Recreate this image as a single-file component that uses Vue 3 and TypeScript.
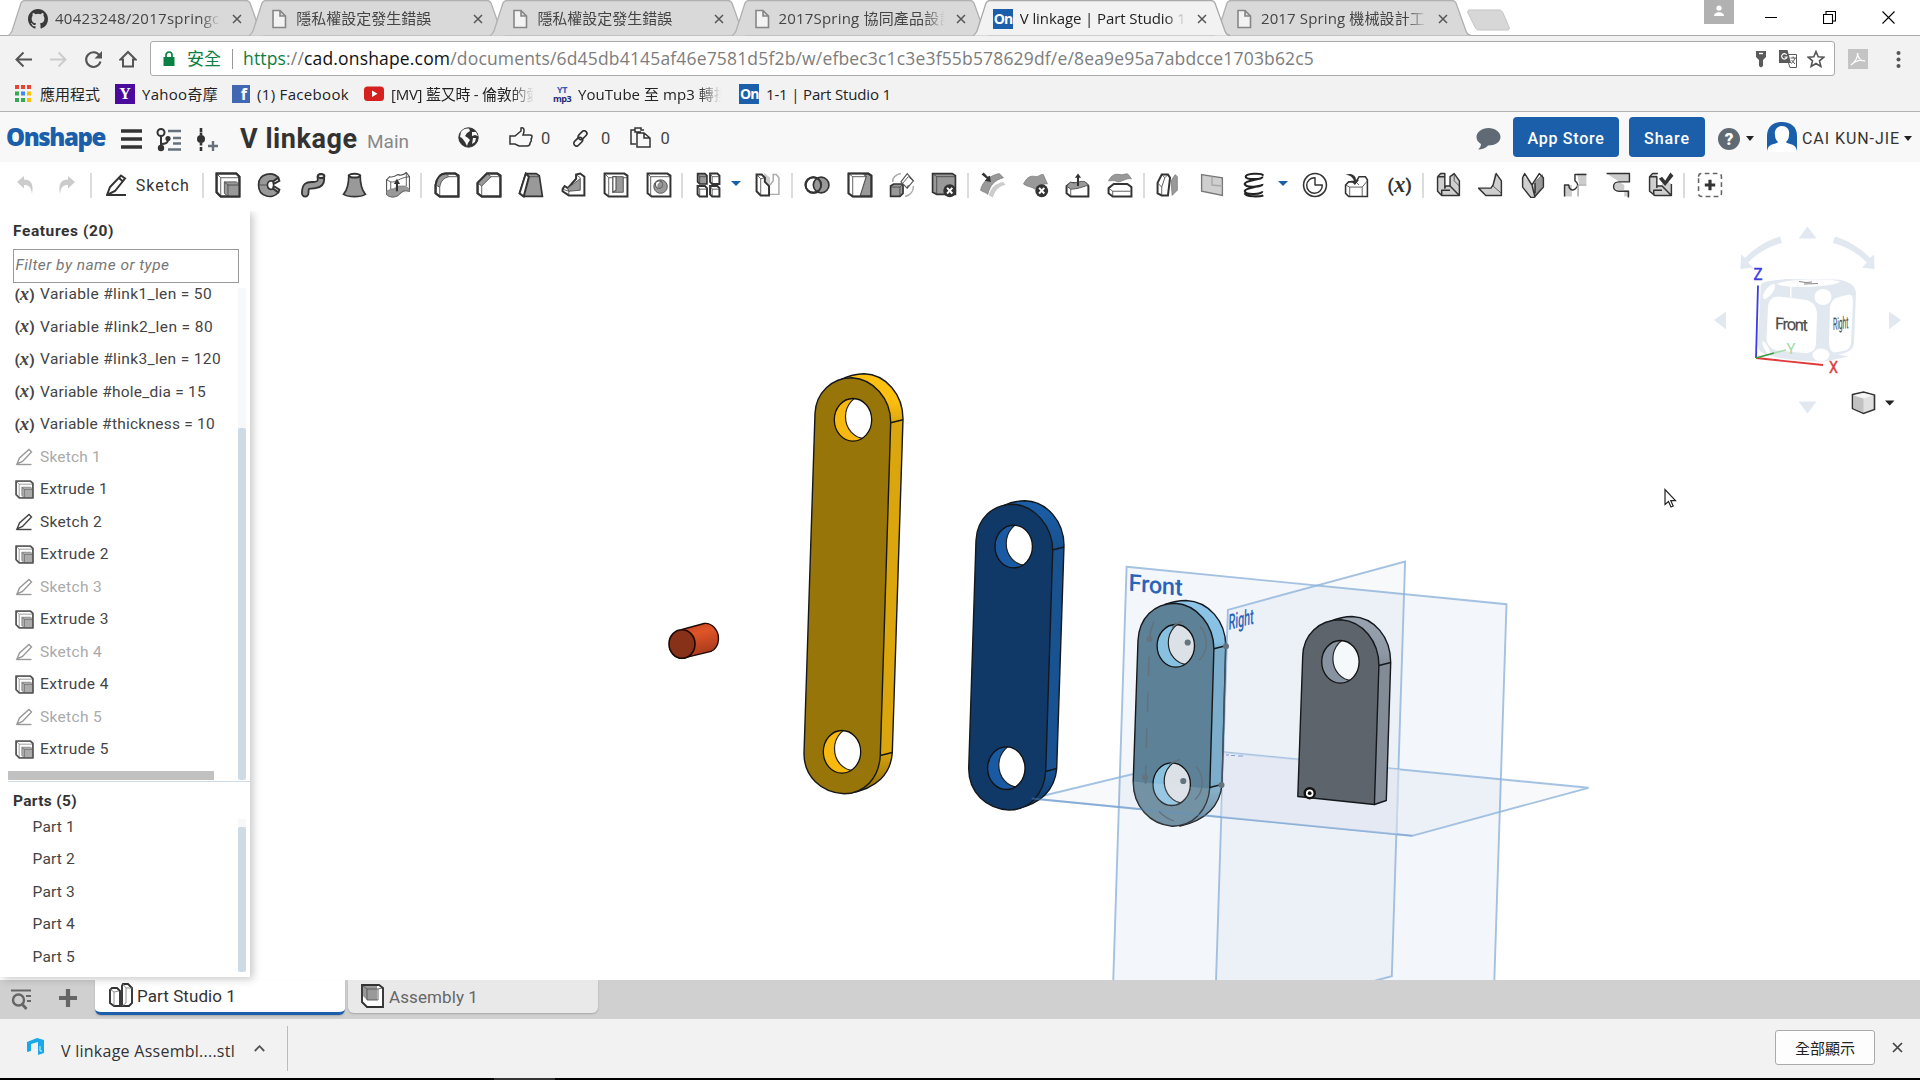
<script setup lang="ts">
import type { Directive } from 'vue'

interface Tab { title: string; kind: 'github' | 'page' | 'onshape'; width?: number }
interface Bookmark { label: string; icon: string; width: number; clip?: number; gap: number }
interface Feature { label: string; kind: 'var' | 'sketch' | 'extrude'; off?: boolean; width: number }

/* Tracks a label out (or in) so that it takes up the given width in pixels. */
const vFit: Directive<HTMLElement, number | undefined> = {
  mounted(el, { value }) {
    if (!value) return
    const count = Array.from(el.textContent ?? '').length
    const natural = el.getBoundingClientRect().width
    el.style.letterSpacing = `${(value - natural) / count}px`
  },
}

const tabs: Tab[] = [
  { title: '40423248/2017springcd', kind: 'github', width: 174 },
  { title: '隱私權設定發生錯誤', kind: 'page', width: 135 },
  { title: '隱私權設定發生錯誤', kind: 'page', width: 135 },
  { title: '2017Spring 協同產品設計', kind: 'page', width: 176 },
  { title: 'V linkage | Part Studio 1', kind: 'onshape', width: 166 },
  { title: '2017 Spring 機械設計工', kind: 'page', width: 164 },
]

const bookmarks: Bookmark[] = [
  { label: '應用程式', icon: 'apps', width: 60, gap: 14 },
  { label: 'Yahoo奇摩', icon: 'yahoo', width: 76, gap: 15 },
  { label: '(1) Facebook', icon: 'facebook', width: 92, gap: 15 },
  { label: '[MV] 藍又時 - 倫敦的愛', icon: 'youtube', width: 150, clip: 142, gap: 15 },
  { label: 'YouTube 至 mp3 轉換', icon: 'mp3', width: 151, clip: 145, gap: 20 },
  { label: '1-1 | Part Studio 1', icon: 'onshape', width: 125, gap: 16 },
]

const features: Feature[] = [
  { label: 'Variable #link1_len = 50', kind: 'var', width: 172 },
  { label: 'Variable #link2_len = 80', kind: 'var', width: 173 },
  { label: 'Variable #link3_len = 120', kind: 'var', width: 181 },
  { label: 'Variable #hole_dia = 15', kind: 'var', width: 166 },
  { label: 'Variable #thickness = 10', kind: 'var', width: 175 },
  { label: 'Sketch 1', kind: 'sketch', off: true, width: 61 },
  { label: 'Extrude 1', kind: 'extrude', width: 68 },
  { label: 'Sketch 2', kind: 'sketch', width: 62 },
  { label: 'Extrude 2', kind: 'extrude', width: 69 },
  { label: 'Sketch 3', kind: 'sketch', off: true, width: 62 },
  { label: 'Extrude 3', kind: 'extrude', width: 69 },
  { label: 'Sketch 4', kind: 'sketch', off: true, width: 62 },
  { label: 'Extrude 4', kind: 'extrude', width: 69 },
  { label: 'Sketch 5', kind: 'sketch', off: true, width: 62 },
  { label: 'Extrude 5', kind: 'extrude', width: 69 },
]

const parts = ['Part 1', 'Part 2', 'Part 3', 'Part 4', 'Part 5']

/* Tool glyphs on a 24 x 24 grid: d = dark stroke, g = grey fill, w = white fill,
   l = thin line, k = solid dark, f = faint line, s = soft grey fill. */
const G: Record<string, [string, string][]> = {
  extrude: [['w', 'M1 1H20L23 4V23H5L1 19Z'], ['l', 'M1 1L5 5M5 23V5H23'], ['g1', 'M8.500 9H20L23 11.500V23H12L8.500 20Z'], ['l', 'M8.500 9L12 12V23M12 12H23'], ['d', 'M1 1H20L23 4V23H5L1 19Z']],
  revolve: [['g', 'M20 5C15-1 1 0 1 12C1 24 15 26 20 19L15 15.500C12 17.500 9.500 15 9.500 12C9.500 9 12 7 15 8.500Z'], ['w', 'M20 5L21 8L15.500 11L15 8.500ZM20 19L21 16.500L15.500 13L15 15.500Z'], ['l', 'M1 12H10']],
  sweep: [['t1', 'M4.500 20C4.500 10 9 13 14 12C20 11 20 8 19.500 4.500'], ['t2', 'M4.500 20C4.500 10 9 13 14 12C20 11 20 8 19.500 4.500'], ['w', 'M16.500 3.500C17 1 23 1 23 3.500C22 6 17 6 16.500 3.500Z']],
  loft: [['g', 'M6 3C6 11 5 16 1 21C6 24 17 24 22 21C18 16 17 11 17 3Z'], ['w', 'M6 3C7 .5 16 .5 17 3C16 5.500 7 5.500 6 3Z']],
  thicken: [['wl', 'M1 7L4 4C7 5 9 4 12 2C15 3 18 2 20 0L23 4V18C17 16 15 19 12 22C8 24 4 24 1 21Z'], ['g0', 'M1 18L5 16C9 16 10 14 13 13H19L23 16V18C17 16 15 19 12 22C8 24 4 24 1 21Z'], ['l', 'M1 7L5 9C10 10 13 5 23 4M5 9V16M20 1V13'], ['k', 'M10 18V11H8L11 6L14 11H12V18Z']],
  fillet: [['w', 'M1 12C2 5 6 1 11 1H20L23 3V23H5L1 20Z'], ['g1', 'M1 12C2 5 6 1 11 1L14 4C9 5 6 8 5 14Z'], ['l', 'M5 14V23M14 4H23'], ['d', 'M1 12C2 5 6 1 11 1H20L23 3V23H5L1 20Z']],
  chamfer: [['w', 'M1 10L10 1H20L23 3V23H5L1 20Z'], ['g1', 'M1 10L10 1L14 4L5 13Z'], ['l', 'M5 13V23M14 4H23'], ['d', 'M1 10L10 1H20L23 3V23H5L1 20Z']],
  draft: [['g', 'M7 1H17L20 3L23 23H5L1 20Z'], ['w', 'M7 1L10 4L5 23L1 20Z'], ['l', 'M10 4H20']],
  rib: [['w', 'M1 16L3 13L6 15L14 6V2L18 1L22 4V22H7L1 18Z'], ['g1', 'M6 15L18 6V17L7 18Z'], ['l', 'M14 2L18 5V6M1 16L7 18V22']],
  shell: [['w', 'M1 1H20L23 3V23H5L1 20Z'], ['l', 'M1 1L5 5V23M5 5H23'], ['g1', 'M9 4H19V19H9Z'], ['wl', 'M9 4V19L12 17V4Z']],
  hole: [['w', 'M1 1H20L23 3V23H5L1 20Z'], ['l', 'M1 1L4 4V23M4 4H23'], ['g1', 'M7 13.500A6.500 6.500 0 1 0 20 13.500A6.500 6.500 0 1 0 7 13.500'], ['wl', 'M8.500 11.500A3.500 3.500 0 1 0 15.500 11.500A3.500 3.500 0 1 0 8.500 11.500'], ['g0', 'M11 14C15 15 16 12 15 9.500C13 9 10 11 11 14Z']],
  pattern: [['g', 'M2 1H9L11 3V11H4L2 9Z'], ['w', 'M14 1H21L23 3V11H16L14 9ZM2 13H9L11 15V23H4L2 21ZM14 13H21L23 15V23H16L14 21Z'], ['l', 'M2 1L4 4H11M14 1L16 4H23M2 13L4 16H11M14 13L16 16H23M4 4V11M16 4V11M4 16V23M16 16V23']],
  mirror: [['s', 'M8 0L14 5V21L10 23V12Z'], ['f', 'M14 21H22.500V5L20 2H17V8L14 12'], ['w', 'M1 2H6L9 5V9L13 13V22H5L1 18Z'], ['l', 'M1 2L5 6V22M5 6L9 5']],
  boolean: [['w', 'M1 12A7.500 7.500 0 1 0 16 12A7.500 7.500 0 1 0 1 12'], ['g', 'M8.500 12A7.500 7.500 0 1 0 23.500 12A7.500 7.500 0 1 0 8.500 12'], ['d', 'M1 12A7.500 7.500 0 1 0 16 12A7.500 7.500 0 1 0 1 12']],
  split: [['g', 'M1 1H20L23 3V23H5L1 20Z'], ['wl', 'M1 1L15 1L18 4L12 23H5L1 20Z'], ['l', 'M1 1L5 4V23M5 4H18'], ['d', 'M1 1H20L23 3V23H5L1 20Z']],
  transform: [['f', 'M3 9C3 5 6 2 11 1M23 13C23 18 20 22 15 23'], ['g', 'M1 13L4 11H13V20L10 23H1Z'], ['l', 'M1 14H10V23M10 14L13 11'], ['wl', 'M11 9L17 1L23 8L17 15Z'], ['l', 'M13 10L18 4L23 8M17 15L18 12']],
  delpart: [['g', 'M1 1H20L23 3V21H5L1 19Z'], ['l', 'M1 1L5 4V21M5 4H23'], ['x', '17 17']],
  modfillet: [['g0', 'M0 17C2 8 9 3 18 1L22 5C14 7 9 12 7 21C5 19 3 19 0 17Z'], ['s', 'M8 22C10 14 15 10 22 9L24 12C18 13 14 17 12 24Z'], ['k', 'M1 2L3 0L7 4L9 3L10 9L4 8L6 6Z']],
  delface: [['g0', 'M0 11C4 3 8 3 12 4C15 4 17 1 19 2L23 11C19 10 15 14 11 16C7 13 4 14 0 11Z'], ['x', '17 17']],
  moveface: [['w', 'M1 13L5 10H19L22 13V23H5L1 20Z'], ['g1', 'M1 13L5 9C8 12 14 7 19 9L22 12C14 15 9 16 5 16Z'], ['l', 'M5 16V23'], ['k', 'M11 13V5H9L12 1L15 5H13V13Z']],
  replface: [['g0', 'M1 8C4 2 8 1 12 2C16 3 18 0 20 2L23 6C18 5 14 9 10 9C6 7 4 8 1 8Z'], ['w', 'M1 15L6 11H19L23 14V23H5L1 20Z'], ['l', 'M1 15L5 18H22M5 18V23']],
  offset: [['g0', 'M14 8L18 2L20 4V17L15 22Z'], ['w', 'M1 10L5 2H11L13 5L11 22H5L1 20Z'], ['l', 'M5 2L8 5L5 14V22M8 5L11 2'], ['l', 'M1 10L5 14']],
  plane: [['sp', 'M2 2L22 5V22L2 18Z'], ['f', 'M12 4V12L22 13']],
  helix: [['h', 'M21 3C19 0 4 1 4 4C4 7 20 7 20 4M20 4C21 7 4 7 3 11C4 15 20 14 20 11M20 11C21 14 4 14 3 18M3 18C4 22 20 21 20 18M3 20C4 24 18 23 21 22']],
  curve: [['wl2', 'M1 12A11 11 0 1 0 23 12A11 11 0 1 0 1 12'], ['d1', 'M12 5V12H19A7.500 7.500 0 1 1 12 5Z']],
  derived: [['w1', 'M1 12L4 9H11L14 4H20L22 7V23H4L1 20Z'], ['l', 'M1 12L5 14H17V23M5 14V23M17 14L22 8M11 9L14 12'], ['k', 'M1 2C7 0 11 3 11 7H14L10 12L6 8H9C8 5 6 3 1 2Z']],
  sheet: [['s1', 'M1 4L4 1H8V13L13 12V4L16 1L22 8V22H5L1 18Z'], ['d1', 'M1 4L4 1H8V13M1 4V18L5 22H22V8L17 1L13 4V13L22 22M13 13H9L8 15V4H1M5 22V17H13'], ['l', 'M17 1V8L22 13']],
  flange: [['s1', 'M14 13L15 1L22 8V22L14 15ZM0 15H14L22 22H7Z'], ['d1', 'M0 15H12L14 12L17 1L22 8V22H7Z'], ['l', 'M14 13L22 20']],
  bend: [['s1', 'M2 2L9 9L11 14L14 9V23L11 24L2 13Z'], ['g0', 'M14 9L21 2V13L14 23Z'], ['d1', 'M2 5L4 1L11 12L18 1L22 5V14L13 24H10L2 14ZM11 12L14 24M14 10V20']],
  corner: [['s', 'M1 12H8V23H1ZM13 1H22V11H15Z'], ['d1', 'M1 23V12H5C5 16 8 18 11 16C15 13 14 10 11 8V2H22'], ['f', 'M14 12H22M14 12V23']],
  tab: [['s', 'M1 1H23V9H13C7 11 7 16 13 17H23V23H18V12Z'], ['d1', 'M1 1H23V9H13C6 9 6 18 13 18H22V24']],
  finish: [['s1', 'M1 4L4 1H8V13L13 12V5L22 11V22H6L1 18Z'], ['d1', 'M9 1H4L1 4V18L6 22H22V11M1 4H8V15M8 13H13L22 22M5 22V17H13'], ['k', 'M10 6L13 4L16 8L21 0L24 3L16 13Z']],
  add: [['dash', 'M1 4V4C1 2 2 1 4 1H20C22 1 23 2 23 4V20C23 22 22 23 20 23H4C2 23 1 22 1 20Z'], ['k', 'M10.500 7H13.500V10.500H17V13.500H13.500V17H10.500V13.500H7V10.500H10.500Z']],
}

const toolGroups: string[][] = [
  ['extrude', 'revolve', 'sweep', 'loft', 'thicken'],
  ['fillet', 'chamfer', 'draft', 'rib', 'shell', 'hole'],
  ['pattern', '>', 'mirror'],
  ['boolean', 'split', 'transform', 'delpart'],
  ['modfillet', 'delface', 'moveface', 'replface'],
  ['offset', 'plane', 'helix', '>', 'curve', 'derived', '(x)'],
  ['sheet', 'flange', 'bend', 'corner', 'tab', 'finish'],
  ['add'],
]

interface Link { id: string; cls: string; back: string; front: string; seams: string; holes: [number, number][] }
const links: Link[] = [
  {
    id: 'gold', cls: 'gold',
    back: 'M840 379.500Q853 373.300 864 373.300C886 374 903 394 903 418.500L892.300 752C891 773 877 788 850 792.500Z',
    front: 'M815 413C816 392 832 377.300 852 377.300C873 378.500 890.700 398 890.700 421.700L880.300 755C879 778 864 793.300 844 793.300C821 792 804 776 804 753Z',
    seams: 'M890.700 422.300L903 419.300M880.300 755L892.300 752',
    holes: [[853, 419.3], [842, 751.3]],
  },
  {
    id: 'navy', cls: 'navy',
    back: 'M1004 505Q1014 500.300 1025 500.300C1047 501 1064 521 1064 545L1056.700 768.300C1055 789 1041 804 1014 809Z',
    front: 'M976 540C977 518 993 503.700 1013 503.700C1035 505 1052.700 526 1052.700 550L1045.700 771C1044 794 1029 809.500 1009 809.500C986 808 968.700 792 968.700 768Z',
    seams: 'M1052.700 549.500L1064 546.500M1045.700 771L1056.700 768',
    holes: [[1013.7, 546], [1006.3, 767.7]],
  },
  {
    id: 'sky', cls: 'sky',
    back: 'M1165 604Q1176 600 1186 600C1209 601 1225.700 621 1225.700 645L1222 784C1220 805 1206 820 1180 825.500Z',
    front: 'M1138 640C1139 618 1154 602.700 1175 602.700C1197 604 1213.900 625 1213.900 648.300L1209.800 787.300C1208 810 1193 825.700 1172.400 825.700C1150 824 1133.200 806 1133.200 781Z',
    seams: 'M1213.900 648.300L1225.700 645.300M1209.800 787L1222 784',
    holes: [[1175.8, 645.3], [1171.7, 783.7]],
  },
  {
    id: 'slate', cls: 'slate',
    back: 'M1330 621Q1342 616 1352 616C1374 617 1390.700 636 1390.700 662L1386.300 800L1374.400 804Z',
    front: 'M1302.700 656C1303 634 1319 619.300 1341 619.300C1363 621 1378.900 641 1378.900 665L1374.400 804L1297.800 796Z',
    seams: 'M1378.900 665L1390.700 662',
    holes: [[1340.4, 661.3]],
  },
]
</script>

<template>
  <div class="screen">
    <!-- Tab strip -->
    <div class="tabstrip">
      <div v-for="(t, i) in tabs" :key="i" class="tab" :class="{ active: t.kind === 'onshape' }">
        <svg class="tab-shape" width="258" height="36" viewBox="0 0 258 36">
          <path d="M0 35.500C2 35 3 33 4 31L13 3C14 1 15 .5 17 .5H238C240 .5 241 1 242 3L252 31C253 34 254 35 257 35.500" />
        </svg>
        <svg v-if="t.kind === 'github'" class="fav" width="20" height="20" viewBox="0 0 16 16"><path fill="#3a3a3a" d="M8 0C3.580 0 0 3.580 0 8c0 3.540 2.290 6.530 5.470 7.590.4.070.55-.17.55-.38v-1.490c-2.010.37-2.530-.49-2.690-.94-.09-.23-.48-.94-.82-1.130-.28-.15-.68-.52-.01-.53.63-.01 1.080.58 1.230.82.72 1.210 1.870.87 2.330.66.070-.52.28-.87.51-1.070-1.780-.2-3.640-.89-3.640-3.950 0-.87.31-1.590.82-2.150-.08-.2-.36-1.020.08-2.120 0 0 .67-.21 2.200.82a7.600 7.600 0 0 1 4 0c1.530-1.040 2.200-.82 2.200-.82.44 1.100.16 1.920.08 2.120.51.56.82 1.270.82 2.150 0 3.070-1.870 3.750-3.650 3.950.29.25.54.73.54 1.480v2.190c0 .21.15.46.55.38A8 8 0 0 0 16 8c0-4.420-3.580-8-8-8z" /></svg>
        <svg v-else-if="t.kind === 'page'" class="fav" width="20" height="20" viewBox="0 0 20 20"><path d="M4 1.500H11L16.500 7V18.500H4ZM11 1.500V7H16.500" fill="#f3f3f3" stroke="#868686" stroke-width="1.600" /></svg>
        <span v-else class="fav on">On</span>
        <span class="tab-title"><span v-fit="t.width" class="fit">{{ t.title }}</span></span>
        <svg class="tab-x" width="10" height="10" viewBox="0 0 10 10"><path d="M1 1L9 9M9 1L1 9" stroke="#555" stroke-width="1.500" /></svg>
      </div>
      <svg class="newtab" width="44" height="22" viewBox="0 0 44 22"><path d="M3 1H32C34 1 35 2 36 4L42 18C43 20 42 21 40 21H12C10 21 9 20 8 18L1 4C0 2 1 1 3 1Z" fill="#d7d7d7" stroke="#c4c4c4" /></svg>
      <div class="winbar">
        <span class="profile"><svg width="12" height="12" viewBox="0 0 12 12"><circle cx="6" cy="3" r="2.600" fill="#fff" /><path d="M1 11C1 6 11 6 11 11Z" fill="#fff" /></svg></span>
        <svg width="12" height="12" viewBox="0 0 12 12"><path d="M0 6.500H12" stroke="#000" /></svg>
        <svg width="13" height="13" viewBox="0 0 13 13"><path d="M.5 3.500H9.500V12.500H.5ZM3 3V.500H12.500V10H10" fill="none" stroke="#000" stroke-width="1.100" /></svg>
        <svg width="13" height="13" viewBox="0 0 13 13"><path d="M.5 .5L12.500 12.500M12.500 .5L.5 12.500" stroke="#000" stroke-width="1.100" /></svg>
      </div>
    </div>

    <!-- Address row -->
    <div class="addr">
      <svg width="17" height="17" viewBox="0 0 17 17"><path d="M17 8.500H2M8.500 1.500L1.500 8.500L8.500 15.500" fill="none" stroke="#555" stroke-width="2" /></svg>
      <svg width="17" height="17" viewBox="0 0 17 17"><path d="M0 8.500H15M8.500 1.500L15.500 8.500L8.500 15.500" fill="none" stroke="#ccc" stroke-width="2" /></svg>
      <svg width="19" height="19" viewBox="0 0 19 19"><path d="M15.500 5.500A7.300 7.300 0 1 0 16.500 11.500" fill="none" stroke="#555" stroke-width="2.100" /><path d="M18 1V8.500H10.500Z" fill="#555" /></svg>
      <svg width="18" height="18" viewBox="0 0 18 18"><path d="M1.500 9.500L9 2L16.500 9.500H14V16.500H4V9.500Z" fill="none" stroke="#555" stroke-width="2" /></svg>
      <div class="omni">
        <svg width="12" height="15" viewBox="0 0 12 15"><path d="M.5 6H11.500V15H.5Z" fill="#0b8043" /><path d="M3 6V4A3 3 0 0 1 9 4V6" fill="none" stroke="#0b8043" stroke-width="1.700" /></svg>
        <span class="secure">安全</span><i class="bar"></i>
        <span v-fit="1071" class="url"><b class="g">https</b>://<b class="k">cad.onshape.com</b>/documents/6d45db4145af46e7581d5f2b/w/efbec3c1c3e3f55b578629df/e/8ea9e95a7abdcce1703b62c5</span>
        <span class="omni-icons">
          <svg width="12" height="18" viewBox="0 0 12 18"><path d="M1 1H11V7L8 10V16L6 17.500L4 16V10L1 7Z" fill="#5a5a5a" /><path d="M4 3.500H8" stroke="#fff" stroke-width="1.400" /></svg>
          <svg width="18" height="18" viewBox="0 0 18 18"><path d="M9.500 4.500H17.500V17.500H11L9.500 13" fill="#fff" stroke="#5a5a5a" /><path d="M0 0H8.500L12 13H0Z" fill="#5a5a5a" /><path d="M7.600 4.800A2.700 2.700 0 1 0 8 7H5.500" fill="none" stroke="#fff" stroke-width="1.200" /><path d="M11.500 8H17M14.200 6.500V8M16 8C15 11 13 13 12 13.500M12.500 10L16 14" fill="none" stroke="#5a5a5a" /></svg>
          <svg width="18" height="18" viewBox="0 0 18 18"><path d="M9 1.500L11.200 6.800L16.800 7.200L12.500 10.900L13.900 16.500L9 13.500L4.100 16.500L5.500 10.900L1.200 7.200L6.800 6.800Z" fill="none" stroke="#555" stroke-width="1.600" /></svg>
        </span>
      </div>
      <svg class="pdf" width="20" height="20" viewBox="0 0 20 20"><path d="M0 0H20V20H0Z" fill="#c4c4c4" /><path d="M3 16C7 13 10 8 9.500 4C10 9 13 12 17 12C12 10.500 7 12 3 16Z" fill="none" stroke="#fff" stroke-width="1.300" /></svg>
      <svg width="5" height="17" viewBox="0 0 5 17"><g fill="#555"><circle cx="2.500" cy="2" r="2" /><circle cx="2.500" cy="8.500" r="2" /><circle cx="2.500" cy="15" r="2" /></g></svg>
    </div>

    <!-- Bookmarks -->
    <div class="marks">
      <div v-for="b in bookmarks" :key="b.label" class="mark" :style="{ marginLeft: b.gap + 'px' }">
        <svg v-if="b.icon === 'apps'" width="18" height="18" viewBox="0 0 18 18"><path fill="#ea4335" d="M1 0h4v4h-4zM7 0h4v4h-4zM13 0h4v4h-4z" /><path fill="#34a853" d="M1 6.500h4v4h-4zM1 13h4v4h-4z" /><path fill="#4285f4" d="M7 6.500h4v4h-4z" /><path fill="#34a853" d="M7 13h4v4h-4z" /><path fill="#fbbc05" d="M13 6.500h4v4h-4zM13 13h4v4h-4z" /></svg>
        <span v-else-if="b.icon === 'yahoo'" class="yahoo">Y</span>
        <span v-else-if="b.icon === 'facebook'" class="fb">f</span>
        <svg v-else-if="b.icon === 'youtube'" width="20" height="20" viewBox="0 0 20 20"><rect y="2.500" width="20" height="14.500" rx="3.500" fill="#d5201f" /><path d="M8 6.500L13.500 9.700L8 13Z" fill="#fff" /></svg>
        <span v-else-if="b.icon === 'mp3'" class="ytmp"><i>YT</i><i>mp3</i></span>
        <span v-else class="on">On</span>
        <span class="mark-text" :class="{ fade: b.clip }" :style="{ width: (b.clip ?? b.width) + 'px' }"><span v-fit="b.width" class="fit">{{ b.label }}</span></span>
      </div>
    </div>

    <!-- Document header -->
    <header class="head">
      <span v-fit="99" class="logo fit">Onshape</span>
      <svg class="burger" width="21" height="20" viewBox="0 0 21 20"><path d="M0 2H21M0 10H21M0 18H21" stroke="#333" stroke-width="3.400" /></svg>
      <svg class="tree" width="26" height="24" viewBox="0 0 26 24"><g fill="none" stroke="#333" stroke-width="2"><circle cx="5" cy="4.500" r="3.500" /><path d="M5 8V17M5 16C11 16 12 14 12 12" /></g><circle cx="5" cy="20" r="3.200" fill="#333" /><circle cx="12" cy="10.500" r="2.600" fill="#333" /><path d="M12 3H25M17 10H25M17 15.500H25M12 21.500H25" stroke="#66717b" stroke-width="2.400" /></svg>
      <svg class="branch" width="22" height="24" viewBox="0 0 22 24"><path d="M4 0V4M4 4.500V7M4 15V17.500M4 19V23" stroke="#333" stroke-width="2.600" /><circle cx="4" cy="11" r="4" fill="#333" /><path d="M11 18H21M16 13V23" stroke="#66717b" stroke-width="2.400" /></svg>
      <h1 v-fit="117.500" class="doc fit">V linkage</h1>
      <span v-fit="42" class="ws fit">Main</span>
      <svg class="globe" width="21" height="21" viewBox="0 0 21 21"><circle cx="10.500" cy="10.500" r="9.700" fill="#333" stroke="#333" /><path d="M3 5C5 2 8 1 11 1.500L12 4L9 6L7 9L10 11L12 13L10 16L9 19L7 15L4 11L2 10ZM14 5L18 5L20 9L17 8L14 9ZM15 11L18 11L17 15L14 17Z" fill="#f8f8f8" /></svg>
      <svg class="thumb" width="24" height="20" viewBox="0 0 24 20"><path d="M1 9H6L12 4V1C15 0 16 3 14 8H21C24 8 23 11 22 12C23 14 22 15 21 16C21 18 20 19 18 19H10L6 17H1Z" fill="none" stroke="#333" stroke-width="1.500" /></svg>
      <span class="cnt c1">0</span>
      <svg class="chain" width="17" height="17" viewBox="0 0 17 17"><g fill="none" stroke="#333" stroke-width="1.700"><rect x="8" y=".5" width="5.500" height="10" rx="2.700" transform="rotate(45 11 5)" /><rect x="3.500" y="6.500" width="5.500" height="10" rx="2.700" transform="rotate(45 6 11.500)" /></g></svg>
      <span class="cnt c2">0</span>
      <svg class="copy" width="21" height="21" viewBox="0 0 21 21"><path d="M6 17H1V3H5V1H11V3H14M5 3V5H11M7 6H14L20 11V20H7ZM14 6V11H20" fill="none" stroke="#333" stroke-width="1.500" /></svg>
      <span class="cnt c3">0</span>
      <span class="grow"></span>
      <svg class="chat" width="25" height="22" viewBox="0 0 25 22"><path d="M12.500 0C19 0 24.500 4 24.500 9C24.500 14 19 17.500 12 17.500C10 20 6 21.500 2 21.500C4 20 5 18 5 16C2 14 .5 12 .5 9C.5 4 6 0 12.500 0Z" fill="#5f6a74" /></svg>
      <button class="btn store"><span v-fit="77" class="fit">App Store</span></button>
      <button class="btn share"><span v-fit="46" class="fit">Share</span></button>
      <span class="help">?</span><i class="caret dark"></i>
      <svg class="avatar" width="30" height="30" viewBox="0 0 30 30"><path d="M0 30V14C0 5 6 0 15 0C24 0 30 5 30 14V30Z" fill="#1b5faa" /><path d="M15 4C20 4 23 8 22 13C22 17 20 19 19 20C20 22 28 22 29 26C30 28 30 30 30 30H0C0 30 0 28 1 26C2 22 10 22 11 20C10 19 8 17 8 13C7 8 10 4 15 4Z" fill="#fff" /></svg>
      <span v-fit="98" class="user fit">CAI KUN-JIE</span><i class="caret dark"></i>
    </header>

    <!-- Feature toolbar -->
    <div class="tools">
      <svg class="undo" width="17" height="20" viewBox="0 0 17 20"><path d="M0 7L7 1V4.500C14 4.500 17 9 15 19C14 12 12 10 7 10V13.500Z" fill="#ccc" /></svg>
      <svg class="redo" width="17" height="20" viewBox="0 0 17 20"><path d="M17 7L10 1V4.500C3 4.500 0 9 2 19C3 12 5 10 10 10V13.500Z" fill="#ccc" /></svg>
      <i class="sep"></i>
      <svg class="pencil" width="22" height="22" viewBox="0 0 22 22"><path d="M1 21L4 13L15 1.500L19 4.500L9 17Z" fill="#fff" stroke="#333" stroke-width="2" /><path d="M13 4L17 7.500M1 21H20" stroke="#333" stroke-width="2" /></svg>
      <span v-fit="54" class="sk fit">Sketch</span>
      <template v-for="(group, gi) in toolGroups" :key="gi">
        <i class="sep"></i>
        <template v-for="(name, ti) in group" :key="ti">
          <i v-if="name === '>'" class="cell-caret"><i class="caret blue"></i></i>
          <span v-else-if="name === '(x)'" class="cell varx">(<em>x</em>)</span>
          <span v-else class="cell">
            <svg width="26" height="26" viewBox="-0.500 -0.500 25 25">
              <template v-for="(p, pi) in G[name]" :key="pi">
                <g v-if="p[0] === 'x'"><circle cx="17.500" cy="17.500" r="6.200" fill="#333" /><path d="M15 14.800L20 20.200M20 14.800L15 20.200" stroke="#fff" stroke-width="1.900" /></g>
                <path v-else :class="'p-' + p[0]" :d="p[1]" />
              </template>
            </svg>
          </span>
        </template>
      </template>
    </div>

    <!-- Workspace -->
    <main class="work">
      <aside class="side">
        <h2 class="side-h"><span v-fit="101" class="fit">Features (20)</span></h2>
        <div class="filter"><span v-fit="154" class="fit">Filter by name or type</span></div>
        <div class="listwrap">
          <ul class="list">
            <li v-for="f in features" :key="f.label" :class="{ off: f.off }">
              <span v-if="f.kind === 'var'" class="fi var">(<em>x</em>)</span>
              <svg v-else-if="f.kind === 'sketch'" class="fi" width="18" height="18" viewBox="0 0 18 18"><path d="M1.500 16L4 10L13.500 1.500L16 4L7 13.500Z" fill="#fff" :stroke="f.off ? '#999' : '#444'" stroke-width="1.400" /><path d="M1 16.500H16" :stroke="f.off ? '#999' : '#444'" stroke-width="1.400" /></svg>
              <svg v-else class="fi soft" width="19" height="19" viewBox="-0.500 -0.500 25 25"><path v-for="(p, pi) in G.extrude" :key="pi" :class="'p-' + p[0]" :d="p[1]" /></svg>
              <span v-fit="f.width" class="fit">{{ f.label }}</span>
            </li>
          </ul>
          <div class="rail"><i class="thumb-a"></i></div>
        </div>
        <div class="hscroll"><i></i></div>
        <h2 class="side-h parts-h"><span v-fit="64" class="fit">Parts (5)</span></h2>
        <div class="listwrap parts">
          <ul class="list plist"><li v-for="p in parts" :key="p"><span v-fit="42.500" class="fit">{{ p }}</span></li></ul>
          <div class="rail"><i class="thumb-b"></i></div>
        </div>
      </aside>

      <svg class="canvas" width="1670" height="772" viewBox="250 207.500 1670 772">
        <defs>
          <linearGradient id="goldSide" x1="0" x2="0" y1="373" y2="793" gradientUnits="userSpaceOnUse"><stop offset="0" stop-color="#ffc112" /><stop offset=".06" stop-color="#ffc010" /><stop offset=".12" stop-color="#dba60d" /><stop offset=".9" stop-color="#dba60d" /><stop offset="1" stop-color="#8a6a08" /></linearGradient>
          <linearGradient id="navySide" x1="0" x2="0" y1="500" y2="810" gradientUnits="userSpaceOnUse"><stop offset="0" stop-color="#1b5faa" /><stop offset=".15" stop-color="#18528f" /><stop offset=".87" stop-color="#185292" /><stop offset="1" stop-color="#0f3765" /></linearGradient>
          <linearGradient id="skySide" x1="0" x2="0" y1="600" y2="826" gradientUnits="userSpaceOnUse"><stop offset="0" stop-color="#8cc5e8" /><stop offset=".18" stop-color="#86c0e2" /><stop offset=".22" stop-color="#7caecb" /><stop offset=".8" stop-color="#7caecb" /><stop offset="1" stop-color="#587a90" /></linearGradient>
          <linearGradient id="slateSide" x1="0" x2="0" y1="616" y2="804" gradientUnits="userSpaceOnUse"><stop offset="0" stop-color="#98a3af" /><stop offset=".2" stop-color="#8d98a4" /><stop offset=".26" stop-color="#838b96" /><stop offset="1" stop-color="#838b96" /></linearGradient>
          <linearGradient id="pin" x1="0" x2=".25" y1="0" y2="1"><stop offset="0" stop-color="#c24420" /><stop offset=".35" stop-color="#e05428" /><stop offset="1" stop-color="#a5391b" /></linearGradient>
          <template v-for="l in links" :key="l.id">
            <clipPath v-for="(h, i) in l.holes" :id="l.id + i" :key="i"><ellipse :cx="h[0]" :cy="h[1]" rx="18.700" ry="21.300" /></clipPath>
          </template>
        </defs>

        <g class="plane">
          <path d="M1126.600 566.300L1506.500 603.700L1494.300 981H1113.200Z" />
          <path class="mid" d="M1227.900 609.300L1405.100 561L1391.800 975.700L1372 981H1216Z" />
          <path class="mid" d="M1031.700 798L1223.500 751.700L1588.600 787.300L1412.200 835.300Z" />
        </g>
        <path d="M1223.500 751.700L1400 769L1397 834L1221 816.500Z" fill="#e6e8f4" opacity=".6" />
        <g fill="#2b63b8" font-family="Roboto, sans-serif">
          <text font-size="23.500" font-weight="500" textLength="54" transform="matrix(1 .1 -.02 1 1128.500 590)">Front</text>
          <text font-size="22" font-weight="500" textLength="25" lengthAdjust="spacingAndGlyphs" transform="matrix(1 -.25 -.02 1 1228.500 629.500)">Right</text>
        </g>
        <path d="M1226 754.500H1229M1231 755H1235M1238 755.500H1243" stroke="#5c7fc4" stroke-width="1.100" opacity=".7" />

        <path d="M682 629L704 623C712 622 719 630 718.500 639C718 646 715 649 711 651L682 658Z" fill="url(#pin)" stroke="#1d0904" stroke-width="1.300" />
        <ellipse cx="682" cy="643.500" rx="13" ry="14.300" fill="#863118" stroke="#1d0904" stroke-width="1.600" />

        <g v-for="l in links" :key="l.id" :class="l.cls">
          <path class="edge back" :d="l.back" />
          <path class="edge" :d="l.seams" />
          <path class="edge front" :d="l.front" />
          <g v-for="(h, i) in l.holes" :key="i">
            <ellipse class="bore" :cx="h[0]" :cy="h[1]" rx="18.700" ry="21.300" />
            <g :clip-path="`url(#${l.id}${i})`"><ellipse class="void" :cx="h[0] + 12" :cy="h[1] - 3" rx="19.500" ry="21.800" /></g>
            <ellipse class="ring" :cx="h[0]" :cy="h[1]" rx="18.700" ry="21.300" />
          </g>
        </g>

        <g>
          <path d="M1133 781L1209 788L1222 784C1220 808 1200 825 1172 826C1150 824 1133 806 1133 781Z" fill="#e8eef5" opacity=".16" />
          <path d="M1031.700 798L1412.200 835.300" stroke="#5f93c9" stroke-width="1.800" opacity=".4" />
          <path d="M1226 640L1222 785" stroke="#5a6a80" stroke-width="1.400" opacity=".7" />
          <path d="M1154 621C1151 628 1149.500 634 1149.500 640L1145.500 777C1145 783 1146.500 789 1149 795" fill="none" stroke="#62727d" stroke-width="1.500" stroke-dasharray="19 17" />
          <path d="M1183 621C1179 622 1175 624 1172 627M1200 626C1208 635 1209 650 1199 660M1180 759C1176 760 1172 762 1169 764M1196 766C1205 776 1204 791 1195 799M1159 811C1164 816 1169 819 1174 820.500" fill="none" stroke="#62727d" stroke-width="1.300" />
          <g fill="#65737e"><circle cx="1149.600" cy="638.500" r="3" /><circle cx="1187.700" cy="642" r="3.100" /><circle cx="1226" cy="645.700" r="3" /><circle cx="1145.200" cy="777" r="3" /><circle cx="1183.300" cy="780.500" r="3.100" /><circle cx="1221.500" cy="784.500" r="3" /></g>
          <circle cx="1309.700" cy="792.700" r="5" fill="#fff" stroke="#111" stroke-width="2.400" /><circle cx="1309.700" cy="792.700" r="1.900" fill="#111" />
        </g>

        <path d="M1665 489V504L1668.500 501L1671 506.500L1673.200 505.500L1670.800 500.200H1675.500Z" fill="#fff" stroke="#222" stroke-width="1.200" />

        <!-- View cube -->
        <g fill="#e1e8ef">
          <path d="M1807.500 226L1816.500 238H1798.500ZM1807.500 413L1816.500 401H1798.500ZM1714 319.500L1726 311V329ZM1901 319.500L1889 311V329Z" />
          <path d="M1780 236L1782 242.500C1769 246 1758 252 1748 262L1753 267L1740.500 268.500L1741 254L1745 257.500C1755 247 1767 240 1780 236Z" />
          <path d="M1835 236L1833 242.500C1846 246 1857 252 1867 262L1862 267L1874.500 268.500L1874 254L1870 257.500C1860 247 1848 240 1835 236Z" />
          <path d="M1761 284C1764 280 1775 280 1786 278.500L1838 279C1850 281 1855 285 1856 292L1854 343C1853 350 1846 353 1838 354L1849 356L1824 361C1800 361 1779 358 1765 354C1759 351 1758 348 1758 340Z" />
        </g>
        <g fill="#fff">
          <path d="M1777 283.500C1784 278 1830 278 1840 281C1836 286 1790 289 1777 283.500Z" />
          <path d="M1779 296L1803 299C1812 300 1817 305 1817 314L1816 344C1815 350 1811 353 1804 352.500L1777 350C1770 348 1767 344 1766.500 338L1768 306C1769 299 1773 296 1779 296Z" />
          <path d="M1841 296L1849 294C1852 294 1853 297 1853 301L1851 343C1850 348 1847 350 1843 350.500L1834 352C1830 350 1829 346 1829 340L1830 307C1831 300 1835 297 1841 296Z" />
          <ellipse cx="1823" cy="296.500" rx="8.500" ry="8" /><ellipse cx="1769" cy="291" rx="3.500" ry="9" transform="rotate(38 1769 291)" /><ellipse cx="1821" cy="354.500" rx="8.500" ry="6.500" /><ellipse cx="1766.500" cy="348" rx="2" ry="8" transform="rotate(-28 1766.500 348)" />
          <path d="M1790 286H1791.500V297H1790Z" />
        </g>
        <path d="M1799 281L1806 282L1812 281.500M1804 283.500L1818 283" stroke="#888" stroke-width="1" fill="none" />
        <g font-family="Roboto, sans-serif">
          <text font-size="16.500" fill="#4c4c4c" stroke="#4c4c4c" stroke-width=".15" textLength="33" transform="matrix(1 .06 0 1 1775 328.500)">Front</text>
          <text font-size="17" fill="#4c4c4c" stroke="#4c4c4c" stroke-width=".15" textLength="15.500" lengthAdjust="spacingAndGlyphs" transform="matrix(1 -.12 0 1 1833 329.500)">Right</text>
          <path d="M1758 285L1756 357.500" stroke="#3c3ce6" stroke-width="1.800" /><path d="M1756 357.500L1823 364.500" stroke="#e03a3a" stroke-width="1.800" /><path d="M1756 357.500L1774 352.500" stroke="#3a9a3a" stroke-width="1.500" /><path d="M1774 352.500L1786 349.500" stroke="#a6dba6" stroke-width="1.500" />
          <text x="1753.500" y="279" font-size="17" fill="#3c3ce6" stroke="#3c3ce6" stroke-width=".4" textLength="9" lengthAdjust="spacingAndGlyphs">Z</text>
          <text x="1786.500" y="353.500" font-size="15" fill="#a3d9a3">Y</text>
          <text x="1829" y="372" font-size="17" fill="#e03a3a" stroke="#e03a3a" stroke-width=".4" textLength="9" lengthAdjust="spacingAndGlyphs">X</text>
        </g>
        <path d="M1852.500 394L1863.500 391.500L1874.500 394.500V409L1863.500 413L1852.500 408Z" fill="#e0e0e0" stroke="#333" stroke-width="1.600" /><path d="M1853.500 395L1863.500 398V412L1853.500 408Z" fill="#c2c2c2" /><path d="M1854 394.800L1863.500 392.500L1873 395L1863.500 398Z" fill="#f6f6f6" />
        <path d="M1885 400H1894.500L1889.700 405Z" fill="#222" />
      </svg>
    </main>

    <!-- Element tabs -->
    <div class="etabs">
      <svg class="find" width="21" height="22" viewBox="0 0 21 22"><path d="M0 1.500H20M15 7H20M16 12H20" stroke="#666" stroke-width="2.200" /><circle cx="7.500" cy="11" r="5.500" fill="none" stroke="#666" stroke-width="2.400" /><path d="M11 15L15.500 20" stroke="#666" stroke-width="2.800" /></svg>
      <svg class="plus" width="18" height="18" viewBox="0 0 18 18"><path d="M9 0V18M0 9H18" stroke="#666" stroke-width="4.200" /></svg>
      <div class="etab cur">
        <svg width="24" height="24" viewBox="0 0 24 24"><path d="M1 7L3 5H8L11 8V23H5L1 20ZM13 3L14 1H19L23 5V20L20 23H13Z" fill="#fff" stroke="#333" stroke-width="1.900" /><path d="M1 6L5 9V23M5 9L10 8M14 1L17 5V20L13 23M17 5H23" fill="none" stroke="#777" stroke-width=".8" /></svg>
        <span v-fit="99" class="fit">Part Studio 1</span>
      </div>
      <div class="etab">
        <svg width="23" height="24" viewBox="0 0 23 24"><path d="M1 1H18L22 4V23H6L1 18Z" fill="#fff" /><path d="M2 2H16V16H6L2 12Z" fill="#999" /><path d="M1 1L6 5V16H17V5H6M17 5L21 4" fill="none" stroke="#555" stroke-width=".9" /><path d="M1 1H18L22 4V23H6L1 18Z" fill="none" stroke="#333" stroke-width="1.900" /></svg>
        <span v-fit="89" class="fit">Assembly 1</span>
      </div>
    </div>

    <!-- Downloads -->
    <div class="dl">
      <svg class="dl-i" width="17" height="17" viewBox="0 0 17 17"><path d="M0 4L10 0L17 2V15L11 17V4L4 6V13L0 14Z" fill="#19a9ea" /><path d="M13 8V13L15 13" stroke="#fff" stroke-width=".8" fill="none" /></svg>
      <span v-fit="174" class="dl-t fit">V linkage Assembl....stl</span>
      <svg width="11" height="7" viewBox="0 0 11 7"><path d="M.8 6L5.500 1.200L10.200 6" fill="none" stroke="#555" stroke-width="1.800" /></svg>
      <i class="dl-sep"></i>
      <span class="grow"></span>
      <button class="showall">全部顯示</button>
      <svg class="dl-x" width="11" height="11" viewBox="0 0 11 11"><path d="M1 1L10 10M10 1L1 10" stroke="#444" stroke-width="1.700" /></svg>
    </div>
    <div class="edgebar"><i></i></div>
  </div>
</template>

<style>
html, body { overflow: hidden; background: #fff; }
</style>

<style scoped>
.screen { width: 1920px; height: 1080px; display: flex; flex-direction: column; overflow: hidden; background: #fff; color: #333; font-family: Roboto, "Noto Sans CJK TC", sans-serif; }
.screen svg { flex: none; display: block; }
.fit { display: inline-block; white-space: pre; flex: none; }
.grow { flex: 1; }
em { font-style: italic; }

.tabstrip { height: 36px; flex: none; display: flex; padding-left: 8px; box-sizing: border-box; background: linear-gradient(#fff 35px, #a9a9a9 35px); font: 15px "Open Sans", "Noto Sans CJK TC", sans-serif; color: #444; }
.tab { position: relative; width: 241.200px; height: 36px; flex: none; display: flex; align-items: center; box-sizing: border-box; padding: 1px 0 0 20px; }
.tab-shape { position: absolute; left: 0; top: 0; }
.tab-shape path { fill: #d9d9d9; stroke: #b0b0b0; stroke-width: 1.300; }
.tab.active { z-index: 2; color: #222; }
.tab.active .tab-shape path { fill: #f2f2f2; stroke: #a9a9a9; }
.fav { position: relative; }
.on { width: 20px; height: 20px; box-sizing: border-box; background: #1b5faa; color: #fff; font: 700 14px/20px "Open Sans", sans-serif; letter-spacing: -0.800px; padding-left: 1px; flex: none; overflow: hidden; }
.tab-title { position: relative; width: 166px; height: 24px; line-height: 23px; margin-left: 7px; overflow: hidden; white-space: nowrap; mask-image: linear-gradient(90deg, #000 145px, transparent 166px); }
.tab-x { position: relative; margin-left: 11px; margin-top: 1px; }
.newtab { margin: 9px 0 0 12px; }
.winbar { margin-left: auto; display: flex; align-items: flex-start; padding-right: 25px; }
.profile { width: 30px; height: 24px; background: #b1b1b1; display: flex; align-items: center; justify-content: center; margin-right: 31px; }
.winbar svg { margin-top: 11px; }
.winbar .profile svg { margin-top: -3px; }
.winbar > svg + svg { margin-left: 46px; }

.addr { height: 41px; flex: none; display: flex; align-items: center; background: #f2f2f2; padding: 0 19px 0 15px; box-sizing: border-box; }
.addr > svg:nth-child(2) { margin-left: 18px; }
.addr > svg:nth-child(3) { margin-left: 17px; }
.addr > svg:nth-child(4) { margin-left: 16px; }
.omni { margin-left: 13px; width: 1685px; height: 35px; margin-top: 4px; box-sizing: border-box; border: 1.500px solid #aaa; border-radius: 3px; background: #fff; display: flex; align-items: center; padding-left: 12px; }
.addr > svg { margin-top: 5px; }
.secure { margin-left: 12px; width: 35px; font: 17px "Noto Sans CJK TC", sans-serif; color: #0b8043; white-space: nowrap; padding-bottom: 2px; }
.bar { width: 1px; height: 20px; background: #999; margin: 0 10px 0 10px; }
.url { display: inline-block; font: 17.500px "Open Sans", sans-serif; color: #7d7d7d; white-space: nowrap; flex: none; padding-bottom: 2px; }
.url b { font-weight: 400; }
.url .g { color: #0b8043; }
.url .k { color: #111; }
.omni-icons { margin-left: auto; display: flex; gap: 12px; align-items: center; padding-right: 9px; }
.omni-icons svg:last-child { margin-left: -2px; }
.pdf { margin-left: 13px; margin-right: 28px; }

.marks { height: 35px; flex: none; box-sizing: border-box; background: #f2f2f2; border-bottom: 1.500px solid #b2b2b2; display: flex; align-items: center; padding-bottom: 1px; font: 15px "Open Sans", "Noto Sans CJK TC", sans-serif; color: #222; }
.mark { display: flex; align-items: center; gap: 7px; flex: none; }
.mark:first-child { gap: 8px; }
.mark:nth-child(2) { margin-right: -1px; }
.mark-text { overflow: hidden; white-space: nowrap; flex: none; }
.mark-text.fade { mask-image: linear-gradient(90deg, #000 120px, transparent 143px); }
.yahoo { width: 20px; height: 20px; background: #4b0a9e; color: #fff; text-align: center; font: 700 16px/20px "Liberation Serif", serif; }
.fb { width: 18px; height: 18px; background: #4267b2; color: #fff; text-align: right; box-sizing: border-box; padding-right: 3px; font: 700 16px/19px "Open Sans", sans-serif; overflow: hidden; }
.ytmp { width: 18px; display: flex; flex-direction: column; align-items: center; color: #3a55b5; font: 700 9px/9px "Open Sans", sans-serif; letter-spacing: -0.500px; }
.ytmp i { font-style: normal; }
.ytmp i:last-child { color: #1f2e78; }

.head { height: 50px; flex: none; background: #f8f8f8; display: flex; align-items: center; padding-left: 6px; box-sizing: border-box; font-size: 16px; }
.logo { font: 800 24px/50px "Open Sans", sans-serif; color: #1b5faa; height: 50px; }
.burger { margin-left: 16px; margin-top: 3px; }
.tree { margin-left: 14px; margin-top: 6px; }
.branch { margin-left: 15px; margin-top: 6px; }
.doc { margin: 3px 0 0 21px; font-size: 27px; font-weight: 700; color: #333; line-height: 48px; }
.ws { margin-left: 9.500px; font-size: 19px; color: #888; margin-top: 8px; }
.globe { margin-left: 49px; }
.thumb { margin-left: 30px; }
.cnt { width: 10px; font-size: 16.500px; color: #444; margin-top: 2px; }
.c1 { margin-left: 8px; }
.chain { margin-left: 20.500px; margin-top: 2px; }
.c2 { margin-left: 12.500px; }
.copy { margin-left: 18.500px; margin-top: 1px; }
.c3 { margin-left: 10px; }
.chat { margin-right: 12px; margin-top: 3px; }
.btn { height: 40px; padding: 2px 0 0; box-sizing: border-box; border: 0; border-radius: 4px; background: #1b5faa; color: #fff; font: 500 16px Roboto, sans-serif; display: flex; align-items: center; justify-content: center; }
.store { width: 106px; }
.share { width: 76px; margin: 0 13px 0 10px; }
.help { width: 22px; height: 22px; border-radius: 50%; background: #5f6a74; color: #fff; font: 900 17px/23px Roboto, sans-serif; text-align: center; margin-top: 3px; }
.caret { width: 0; height: 0; border: 4.500px solid transparent; border-bottom: 0; border-top: 5px solid #222; flex: none; }
.help + .caret { margin: 2px 13px 0 6px; }
.user { margin-left: 5px; font-size: 16px; color: #333; margin-top: 2px; }
.user + .caret { margin: 2px 8px 0 4px; }
.blue { border-top-color: #1b5faa; }

.tools { height: 46px; flex: none; display: flex; align-items: center; padding-left: 17px; box-sizing: border-box; font-size: 16px; }
.redo { margin-left: 24px; }
.redo + .sep { margin-left: 15px; }
.pencil { margin-left: 10.500px; margin-right: 8px; }
.sk { margin-right: 10.500px; }
.sep { width: 2px; height: 25px; background: #dcdcdc; margin: 0 3.300px 0 1.300px; flex: none; }
.cell { width: 42.400px; flex: none; display: flex; justify-content: center; }
.cell-caret { width: 18.200px; flex: none; display: flex; justify-content: center; margin-top: -4px; }
.cell-caret .caret { margin-left: -3px; border-left-width: 5px; border-right-width: 5px; }
.varx, .var { font-family: Roboto, sans-serif; font-weight: 700; color: #333; align-items: baseline; }
.varx { font-size: 19px; }
.varx em, .var em { font-family: "Liberation Serif", serif; font-weight: 700; font-size: 1.200em; line-height: 1; }
.p-w { fill: #fff; stroke: #333; stroke-width: 1.900; }
.p-w1 { fill: #fff; stroke: #333; stroke-width: 1.500; }
.p-g { fill: #999; stroke: #333; stroke-width: 1.600; }
.p-g1 { fill: #999; stroke: #555; stroke-width: .9; }
.p-g0 { fill: #999; stroke: #777; stroke-width: .7; }
.p-s { fill: #ccc; }
.p-s1 { fill: #cfcfcf; }
.p-sp { fill: #cfcfcf; stroke: #777; stroke-width: 1.300; }
.p-d { fill: none; stroke: #333; stroke-width: 1.900; }
.p-d1 { fill: none; stroke: #333; stroke-width: 1.400; stroke-linejoin: round; }
.p-wl { fill: #fff; stroke: #555; stroke-width: 1.100; }
.p-wl2 { fill: #fff; stroke: #333; stroke-width: 1.500; }
.p-l { fill: none; stroke: #444; stroke-width: .8; }
.p-f { fill: none; stroke: #aaa; stroke-width: 1.400; }
.p-k { fill: #333; }
.p-h { fill: none; stroke: #222; stroke-width: 2; }
.p-t1 { fill: none; stroke: #333; stroke-width: 8; stroke-linecap: round; }
.p-t2 { fill: none; stroke: #999; stroke-width: 4.600; stroke-linecap: round; }
.p-dash { fill: none; stroke: #666; stroke-width: 1.500; stroke-dasharray: 4.500 3.200; }

.work { height: 772px; flex: none; display: flex; background: #fff; }
.canvas { flex: none; }
.side { position: relative; z-index: 2; width: 250px; height: 766px; margin-top: 3px; box-sizing: border-box; flex: none; background: #fff; box-shadow: 3px 2px 8px rgba(0, 0, 0, .22); font-size: 15.500px; display: flex; flex-direction: column; clip-path: inset(0 -16px -16px 0); }
.side-h { margin: 0; padding-left: 13px; font-size: 15.500px; font-weight: 700; height: 38px; line-height: 40px; flex: none; }
.filter { width: 226px; height: 34px; margin-left: 12.500px; box-sizing: border-box; border: 1.500px solid #999; flex: none; font-style: italic; color: #777; line-height: 31px; padding-left: 2px; }
.listwrap { display: flex; height: 483px; margin-top: 5px; flex: none; overflow: hidden; }
.list { list-style: none; margin: -10px 0 0; padding: 0; flex: 1; }
.list li { height: 32.500px; display: flex; align-items: center; padding-left: 15px; color: #444; }
.list li.off { color: #aaa; }
.fi { width: 19px; margin-right: 6px; flex: none; }
.soft { opacity: .82; }
.var { display: flex; justify-content: center; font-size: 15.500px; color: #444; }
.rail { width: 8px; margin-right: 4px; background: #f7f8fa; display: flex; flex-direction: column; justify-content: flex-end; }
.rail i { display: block; background: #cfdbe4; border-radius: 2px; }
.thumb-a { height: 352px; margin-bottom: -9px; }
.hscroll { height: 10px; margin-left: 8px; border-bottom: 1px solid #cfdbe4; flex: none; display: flex; align-items: flex-start; }
.hscroll i { width: 206px; height: 9px; background: #c1c1c1; }
.hscroll::after { content: ""; width: 8px; height: 9px; margin-left: 24px; background: #cfdbe4; border-radius: 0 0 2px 2px; }
.parts-h { line-height: 39px; height: 37px; }
.parts { height: 153px; margin-top: 0; }
.parts .list { margin-top: -8.500px; }
.list.plist li { padding-left: 32.500px; }
.thumb-b { height: 145px; }

.plane path { fill: rgba(95, 147, 201, .075); stroke: #8fb3d9; stroke-width: 1.900; stroke-opacity: .8; }
.plane path.mid { fill: rgba(100, 140, 170, .052); }
.edge { stroke: #14181c; stroke-width: 1.400; fill: none; stroke-linejoin: round; }
.bore { stroke: none; }
.void { stroke: #222; stroke-width: 1.200; fill: #fff; }
.ring { fill: none; stroke: #111; stroke-width: 1.300; }
.gold .front { fill: #987508; } .gold .back { fill: url(#goldSide); } .gold .bore { fill: #f7b90f; }
.navy .front { fill: #113967; } .navy .back { fill: url(#navySide); } .navy .bore { fill: #1a5aa3; }
.sky .front { fill: #5d8196; } .sky .back { fill: url(#skySide); } .sky .bore { fill: #88c0e0; } .sky .void { fill: #dce1e7; }
.slate .front { fill: #5d646b; } .slate .back { fill: url(#slateSide); } .slate .bore { fill: #8793a0; } .slate .void { fill: #f6f9fb; }

.etabs { height: 39px; flex: none; display: flex; background: #d0d0d0; font-size: 17px; }
.find { margin: 9px 0 0 11px; }
.plus { margin: 9px 18.500px 0 26.500px; }
.etab { width: 250px; height: 33px; box-sizing: border-box; display: flex; align-items: center; padding-left: 13px; gap: 5px; background: #e9e9e9; color: #666; border-radius: 0 0 6px 6px; box-shadow: 0 1px 2px rgba(0, 0, 0, .2); margin-left: 3px; }
.etab svg { margin-top: -2px; }
.etab.cur { height: 35px; background: #fff; color: #333; border-bottom: 3px solid #1b5faa; padding-left: 14px; gap: 4px; margin-left: 0; }

.dl { height: 59px; flex: none; background: #f2f2f2; display: flex; align-items: center; font: 16px "Open Sans", "Noto Sans CJK TC", sans-serif; color: #333; }
.dl-i { margin: -4px 17px 0 27px; }
.dl-t { margin-right: 18.500px; padding-top: 5px; }
.dl-sep { width: 1px; height: 45px; background: #bbb; margin-left: 22px; }
.showall { width: 100px; height: 35px; padding: 0; border: 1px solid #aaa; border-radius: 3px; background: #fdfdfd; font: 15px/30px "Noto Sans CJK TC", sans-serif; color: #222; margin: -2px 17px 0 0; }
.dl-x { margin-right: 17px; margin-top: -3px; }
.edgebar { height: 2px; flex: none; background: #000; display: flex; }
.edgebar i { width: 61px; margin-left: 494px; background: #333; }
</style>
